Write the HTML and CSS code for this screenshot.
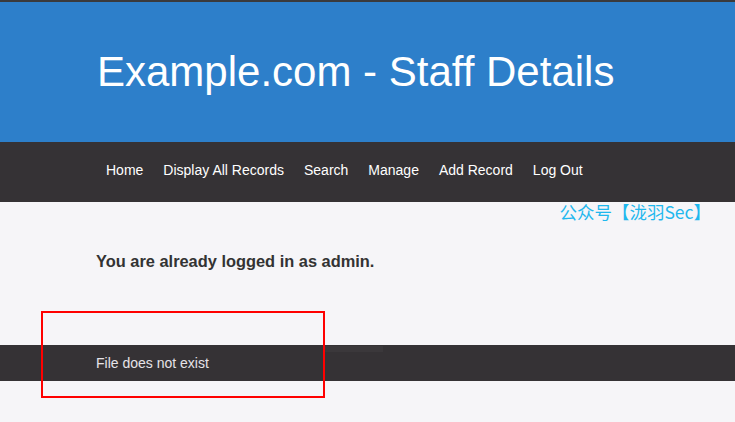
FILE: index.html
```html
<!DOCTYPE html>
<html>
<head>
<meta charset="utf-8">
<link rel="stylesheet" href="styles.css">
</head>
<body>
<header class="header">
  <h1 class="title">Example.com - Staff Details</h1>
</header>
<nav class="nav">
  <a class="nav-link" href="#">Home</a>
  <a class="nav-link" href="#">Display All Records</a>
  <a class="nav-link" href="#">Search</a>
  <a class="nav-link" href="#">Manage</a>
  <a class="nav-link" href="#">Add Record</a>
  <a class="nav-link" href="#">Log Out</a>
</nav>
<div class="watermark">公众号【泷羽Sec】</div>
<main class="main">
  <p class="message">You are already logged in as admin.</p>
</main>
<footer class="footer">
  <span class="footer-text">File does not exist</span>
  <div class="sheen"></div>
  <div class="highlight"></div>
</footer>
</body>
</html>
```
FILE: styles.css
```css
html, body {
  margin: 0;
  padding: 0;
}
body {
  background: #f6f5f8;
  font-family: "Liberation Sans", Arial, sans-serif;
  border-top: 2px solid #3a3a3c;
  height: 420px;
  overflow: hidden;
}
.header {
  background: #2d7fca;
  height: 140px;
  display: flex;
  align-items: center;
  padding-left: 97px;
}
.title {
  margin: 0;
  color: #fff;
  font-weight: normal;
  font-size: 42px;
}
.nav {
  background: #353235;
  height: 60px;
  display: flex;
  align-items: center;
  padding-left: 106px;
  padding-bottom: 4px;
  box-sizing: border-box;
  gap: 20px;
}
.nav-link {
  color: #fff;
  text-decoration: none;
  font-size: 14px;
}
.watermark {
  text-align: right;
  padding-right: 24px;
  font-family: "Noto Sans CJK SC", sans-serif;
  font-size: 17.5px;
  line-height: 20px;
  color: #1fb8ee;
}
.main {
  padding-left: 96px;
}
.message {
  margin: 29px 0 0;
  font-size: 16.4px;
  font-weight: bold;
  color: #333;
  line-height: 20px;
}
.footer {
  position: relative;
  margin-top: 74px;
  background: #353235;
  height: 36px;
  display: flex;
  align-items: center;
  padding-left: 96px;
}
.footer-text {
  color: #e6e3e8;
  font-size: 14px;
}
.sheen {
  position: absolute;
  left: 325px;
  top: 1px;
  width: 58px;
  height: 6px;
  background: #3b383b;
}
.highlight {
  position: absolute;
  left: 41px;
  top: -34px;
  width: 280px;
  height: 83px;
  border: 2px solid #ff0000;
}
```
